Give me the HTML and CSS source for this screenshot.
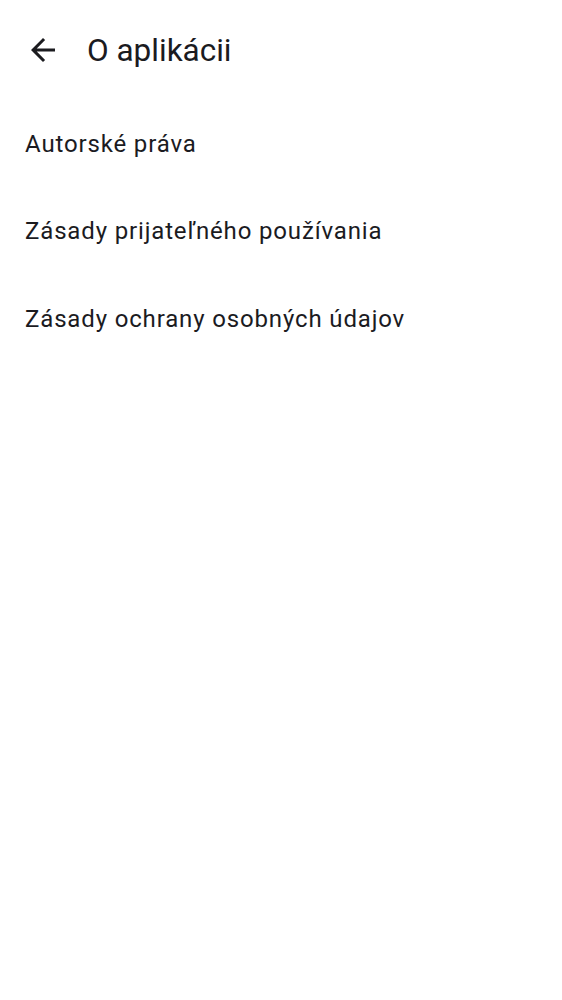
FILE: index.html
```html
<!DOCTYPE html>
<html lang="sk">
<head>
<meta charset="utf-8">
<link rel="stylesheet" href="styles.css">
</head>
<body>
<header class="topbar">
  <button class="back" aria-label="Späť">
    <svg viewBox="0 0 24 24" width="36" height="36"><path d="M20 11H7.83l5.59-5.59L12 4l-8 8 8 8 1.41-1.41L7.83 13H20v-2z" fill="#1b1b1f"/></svg>
  </button>
  <h1 class="title">O aplikácii</h1>
</header>
<ul class="list">
  <li class="item">Autorské práva</li>
  <li class="item">Zásady prijateľného používania</li>
  <li class="item">Zásady ochrany osobných údajov</li>
</ul>
</body>
</html>
```
FILE: styles.css
```css
html, body {
  margin: 0;
  padding: 0;
  background: #ffffff;
  font-family: Roboto, "Noto Sans", sans-serif;
  color: #1b1b1f;
}
.topbar {
  display: flex;
  align-items: center;
  height: 100px;
  padding-left: 25px;
}
.back {
  border: 0;
  background: none;
  padding: 0;
  width: 36px;
  height: 36px;
  display: flex;
}
.title {
  margin: 0 0 0 26px;
  font-size: 31.5px;
  font-weight: 400;
}
.list {
  list-style: none;
  margin: 0;
  padding: 0;
}
.item {
  height: 87.5px;
  display: flex;
  align-items: center;
  padding-left: 25px;
  font-size: 24px;
  letter-spacing: 0.85px;
}
```
